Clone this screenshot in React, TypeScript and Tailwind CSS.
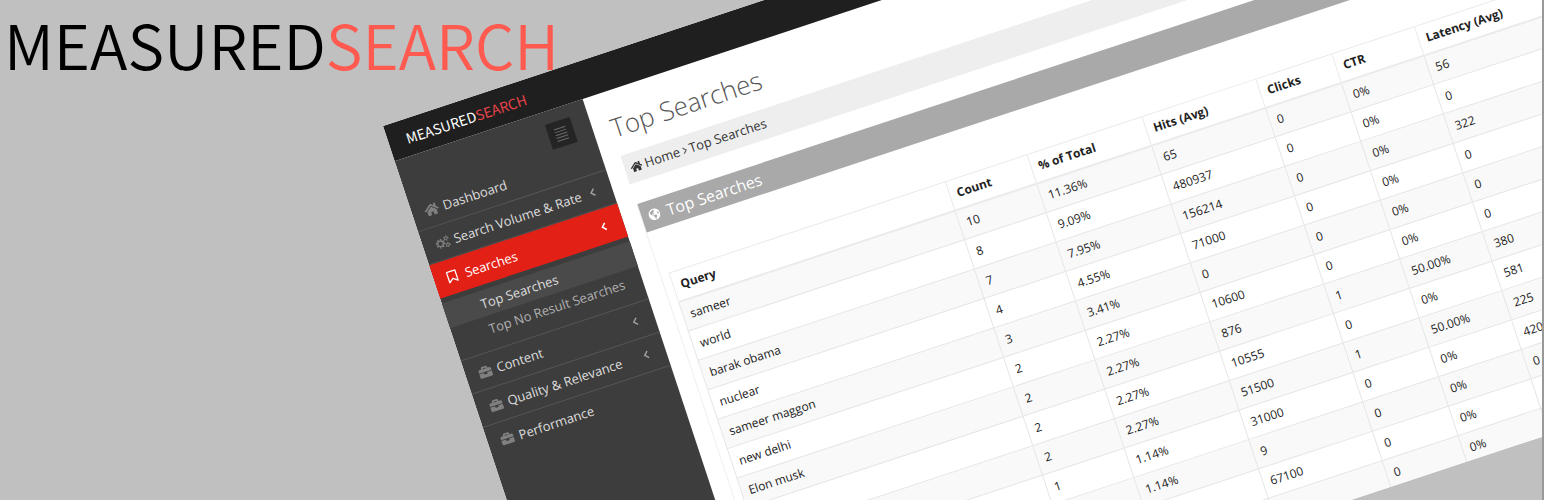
import React from "react";
import { FaHome, FaBriefcase, FaGlobeAmericas } from "react-icons/fa";

type IconType = React.ComponentType<{ className?: string }>;

const columns = [
  { label: "Query", width: "w-[291px]" },
  { label: "Count", width: "w-[86px]" },
  { label: "% of Total", width: "w-[121px]" },
  { label: "Hits (Avg)", width: "w-[120px]" },
  { label: "Clicks", width: "w-[80px]" },
  { label: "CTR", width: "w-[87px]" },
  { label: "Latency (Avg)", width: "w-[160px]" },
];

const rows = [
  ["sameer", "10", "11.36%", "65", "0", "0%", "56"],
  ["world", "8", "9.09%", "480937", "0", "0%", "0"],
  ["barak obama", "7", "7.95%", "156214", "0", "0%", "322"],
  ["nuclear", "4", "4.55%", "71000", "0", "0%", "0"],
  ["sameer maggon", "3", "3.41%", "0", "0", "0%", "0"],
  ["new delhi", "2", "2.27%", "10600", "0", "0%", "0"],
  ["Elon musk", "2", "2.27%", "876", "1", "50.00%", "380"],
  ["", "2", "2.27%", "10555", "0", "0%", "581"],
  ["", "2", "2.27%", "51500", "1", "50.00%", "225"],
  ["", "1", "1.14%", "31000", "0", "0%", "420"],
  ["", "1", "1.14%", "9", "0", "0%", "0"],
  ["", "", "", "67100", "0", "0%", ""],
  ["", "", "", "", "0", "0%", ""],
];

function GearsIcon({ className = "" }: { className?: string }) {
  return (
    <svg viewBox="0 0 16 14" fill="none" stroke="currentColor" className={className}>
      <circle cx="5.5" cy="7.5" r="3" strokeWidth="1.4" />
      <circle cx="5.5" cy="7.5" r="4.4" strokeWidth="1.4" strokeDasharray="1.8 1.656" />
      <circle cx="12.8" cy="3.4" r="1.5" strokeWidth="1" />
      <circle cx="12.8" cy="3.4" r="2.4" strokeWidth="1" strokeDasharray="1.1 1.413" />
      <circle cx="12.8" cy="10.8" r="1.5" strokeWidth="1" />
      <circle cx="12.8" cy="10.8" r="2.4" strokeWidth="1" strokeDasharray="1.1 1.413" />
    </svg>
  );
}

function BookmarkIcon({ className = "" }: { className?: string }) {
  return (
    <svg viewBox="0 0 14 14" fill="none" stroke="currentColor" strokeWidth="1.4" strokeLinejoin="round" className={className}>
      <path d="M.8 1.2h9.4v11.6L5.5 9.2.8 12.8z" />
    </svg>
  );
}

function Chevron({ className = "" }: { className?: string }) {
  return (
    <svg viewBox="0 0 12 12" fill="none" stroke="currentColor" strokeWidth="1.5" className={className}>
      <path d="M8 2.5 4.5 6 8 9.5" />
    </svg>
  );
}

function Wordmark({ className, accent }: { className: string; accent: string }) {
  return (
    <span className={`font-['Noto_Sans_CJK_SC','Open_Sans',sans-serif] whitespace-nowrap ${className}`}>
      MEASURED<span className={accent}>SEARCH</span>
    </span>
  );
}

function MenuItem({ icon: Icon, label, arrow, active, last }: {
  icon: IconType; label: string; arrow?: boolean; active?: boolean; last?: boolean;
}) {
  return (
    <a
      href="#"
      className={`flex h-[35px] items-center gap-1 pl-3 pr-[14px] ${
        active ? "bg-[#e32016] text-white" : last ? "text-[#dedede]" : "border-b border-[#555] text-[#dedede]"
      }`}
    >
      <Icon className={`h-[13px] w-4 shrink-0 ${active ? "text-white" : "text-[#808080]"}`} />
      <span className="grow whitespace-nowrap">{label}</span>
      {arrow && <Chevron className={`size-3 ${active ? "text-white" : "text-[#a0a0a0]"}`} />}
    </a>
  );
}

function Sidebar() {
  return (
    <nav className="w-[198px] shrink-0 bg-[#3d3d3d] text-[13px] leading-[18px]">
      <div className="flex h-[40px] justify-end pt-[13px] pr-[18px]">
        <button aria-label="Toggle sidebar" className="flex h-[26px] w-[26px] shrink-0 flex-col items-center justify-center gap-[2px] bg-[#242424]">
          <span className="h-px w-3 bg-[#6a6a6a]" />
          <span className="h-px w-3 bg-[#6a6a6a]" />
          <span className="h-px w-3 bg-[#6a6a6a]" />
          <span className="h-px w-3 bg-[#6a6a6a]" />
          <span className="h-px w-3 bg-[#6a6a6a]" />
        </button>
      </div>
      <MenuItem icon={FaHome} label="Dashboard" />
      <MenuItem icon={GearsIcon} label="Search Volume & Rate" arrow />
      <MenuItem icon={BookmarkIcon} label="Searches" arrow active />
      <div className="border-b border-[#555] pt-[5px] pb-[8px]">
        <a href="#" className="flex h-[26px] items-center bg-[#4a4a4a] pl-[37px] text-[#dedede]">Top Searches</a>
        <a href="#" className="flex h-[26px] items-center pl-[37px] text-[#b0b0b0]">Top No Result Searches</a>
      </div>
      <MenuItem icon={FaBriefcase} label="Content" arrow />
      <MenuItem icon={FaBriefcase} label="Quality & Relevance" arrow />
      <MenuItem icon={FaBriefcase} label="Performance" last />
    </nav>
  );
}

function SearchTable() {
  return (
    <table className="table-fixed border-collapse text-xs leading-[18px] text-[#222]">
      <thead>
        <tr className="h-[30px]">
          {columns.map((c) => (
            <th key={c.label} className={`${c.width} border border-b-2 border-[#ebebeb] px-[7px] text-left font-bold text-[#222]`}>
              {c.label}
            </th>
          ))}
        </tr>
      </thead>
      <tbody>
        {rows.map((r, i) => (
          <tr key={i} className="h-[31px] odd:bg-[#f9f9f9]">
            {r.map((v, j) => (
              <td key={j} className="border border-[#e6e6e6] px-[7px]">{v}</td>
            ))}
          </tr>
        ))}
      </tbody>
    </table>
  );
}

function Dashboard() {
  return (
    <div className="flex h-[659px] w-[1300px] flex-col overflow-hidden bg-white">
      <header className="flex h-[37px] shrink-0 items-center bg-[#1f1f1f] pl-[18px]">
        <Wordmark className="text-sm text-white" accent="text-[#e8434a]" />
      </header>
      <div className="flex grow">
        <Sidebar />
        <main className="grow pt-[19px] pl-[18px]">
          <h1 className="h-[47px] text-[26px] leading-[36px] font-light text-[#555]">Top Searches</h1>
          <div className="flex h-[30px] items-center bg-[#eee] pl-[6px] text-[13px] text-[#333]">
            <FaHome className="size-3" />
            <a href="#" className="ml-[3px]">Home</a>
            <Chevron className="w-[10px] rotate-180 text-[#666]" />
            <a href="#">Top Searches</a>
          </div>
          <section className="mt-[21px] border-l border-[#f0f0f0]">
            <h2 className="flex h-[30px] items-center gap-[7px] bg-[#a9a9a9] pl-[7px] text-base text-white">
              <FaGlobeAmericas className="size-3" />
              Top Searches
            </h2>
            <div className="pt-[45px] pl-[8px]">
              <SearchTable />
            </div>
          </section>
        </main>
      </div>
    </div>
  );
}

export default function App() {
  return (
    <div className="relative h-screen w-full overflow-hidden bg-[#c0c0c0] font-['Open_Sans',sans-serif]">
      <div className="absolute top-[126px] left-[383px] origin-top-left rotate-[-18.3deg]">
        <Dashboard />
      </div>
      <h1 className="relative pl-1 pt-[3px] leading-[80px] text-[62px] text-black">
        <Wordmark className="font-[350]" accent="text-[#ff5a50]" />
      </h1>
      <div className="absolute inset-y-0 right-0 w-[2px] bg-[#999]" />
    </div>
  );
}
